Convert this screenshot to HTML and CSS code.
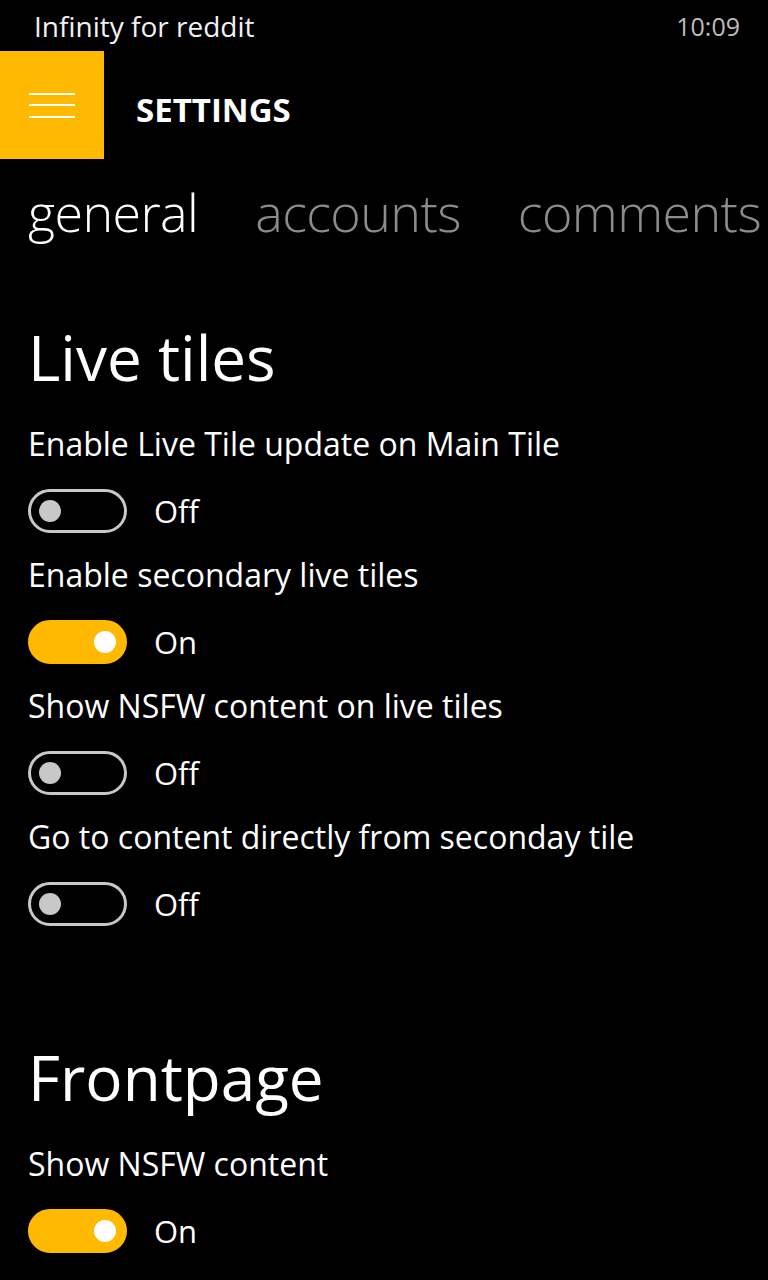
FILE: index.html
```html
<!DOCTYPE html>
<html lang="en">
<head>
    <meta charset="UTF-8">
    <meta name="viewport" content="width=device-width, initial-scale=1.0">
    <title>Settings</title>
    <link rel="stylesheet" href="styles.css">
</head>
<body>
    <div class="status-bar">
        <span class="app-name">Infinity for reddit</span>
        <span class="clock">10:09</span>
    </div>

    <header class="app-bar">
        <div class="menu-button">
            <span></span>
            <span></span>
            <span></span>
        </div>
        <h1>SETTINGS</h1>
    </header>

    <nav class="pivot">
        <span class="pivot-item active">general</span>
        <span class="pivot-item">accounts</span>
        <span class="pivot-item">comments</span>
    </nav>

    <main class="content">
        <section class="group">
            <h2>Live tiles</h2>

            <div class="setting">
                <div class="label">Enable Live Tile update on Main Tile</div>
                <div class="toggle-row">
                    <span class="switch"><span class="knob"></span></span>
                    <span class="state">Off</span>
                </div>
            </div>

            <div class="setting">
                <div class="label">Enable secondary live tiles</div>
                <div class="toggle-row">
                    <span class="switch on"><span class="knob"></span></span>
                    <span class="state">On</span>
                </div>
            </div>

            <div class="setting">
                <div class="label">Show NSFW content on live tiles</div>
                <div class="toggle-row">
                    <span class="switch"><span class="knob"></span></span>
                    <span class="state">Off</span>
                </div>
            </div>

            <div class="setting">
                <div class="label">Go to content directly from seconday tile</div>
                <div class="toggle-row">
                    <span class="switch"><span class="knob"></span></span>
                    <span class="state">Off</span>
                </div>
            </div>
        </section>

        <section class="group">
            <h2>Frontpage</h2>

            <div class="setting">
                <div class="label">Show NSFW content</div>
                <div class="toggle-row">
                    <span class="switch on"><span class="knob"></span></span>
                    <span class="state">On</span>
                </div>
            </div>
        </section>
    </main>
</body>
</html>
```

FILE: styles.css
```css
body {
    margin: 0;
    background-color: #000;
    color: #fff;
    font-family: "Open Sans", "Noto Sans", sans-serif;
    width: 768px;
    height: 1280px;
    overflow: hidden;
}

/* status bar */
.status-bar {
    height: 51px;
    display: flex;
    justify-content: space-between;
    align-items: center;
    padding: 0 28px 0 34px;
    box-sizing: border-box;
}
.app-name {
    color: #f2f2f2;
    font-size: 28px;
}
.clock {
    color: #bdbdbd;
    font-size: 25px;
}

/* app bar */
.app-bar {
    height: 108px;
    display: flex;
    align-items: center;
}
.menu-button {
    width: 104px;
    height: 108px;
    background-color: #ffb900;
    display: flex;
    flex-direction: column;
    justify-content: center;
    align-items: center;
    gap: 9.5px;
}
.menu-button span {
    display: block;
    width: 46px;
    height: 2px;
    background-color: #fff;
}
.app-bar h1 {
    margin: 8px 0 0 32px;
    font-size: 33px;
    font-weight: 700;
}

/* pivot headers */
.pivot {
    display: flex;
    gap: 57px;
    margin-top: 18px;
    padding-left: 28px;
    height: 70px;
    line-height: 70px;
    font-size: 52px;
    font-weight: 300;
    letter-spacing: -0.6px;
    white-space: nowrap;
}
.pivot-item {
    color: #8c8c8c;
}
.pivot-item.active {
    color: #fff;
}

/* settings */
.content {
    padding: 70px 0 0 28px;
}
.group + .group {
    margin-top: 111px;
}
.group h2 {
    margin: 0 0 25px;
    height: 80px;
    line-height: 80px;
    font-size: 62px;
    font-weight: 400;
}
.setting {
    margin-bottom: 20px;
}
.label {
    height: 44px;
    line-height: 44px;
    font-size: 32px;
    white-space: nowrap;
}
.toggle-row {
    display: flex;
    align-items: center;
    margin-top: 23px;
    height: 44px;
}
.switch {
    width: 99px;
    height: 44px;
    box-sizing: border-box;
    border: 3px solid #c8c8c8;
    border-radius: 22px;
    display: flex;
    align-items: center;
    padding: 0 8px;
}
.switch .knob {
    width: 22px;
    height: 22px;
    border-radius: 50%;
    background-color: #c8c8c8;
}
.switch.on {
    background-color: #ffb900;
    border-color: #ffb900;
    justify-content: flex-end;
}
.switch.on .knob {
    background-color: #fff;
}
.state {
    margin-left: 27px;
    font-size: 31px;
}
```
